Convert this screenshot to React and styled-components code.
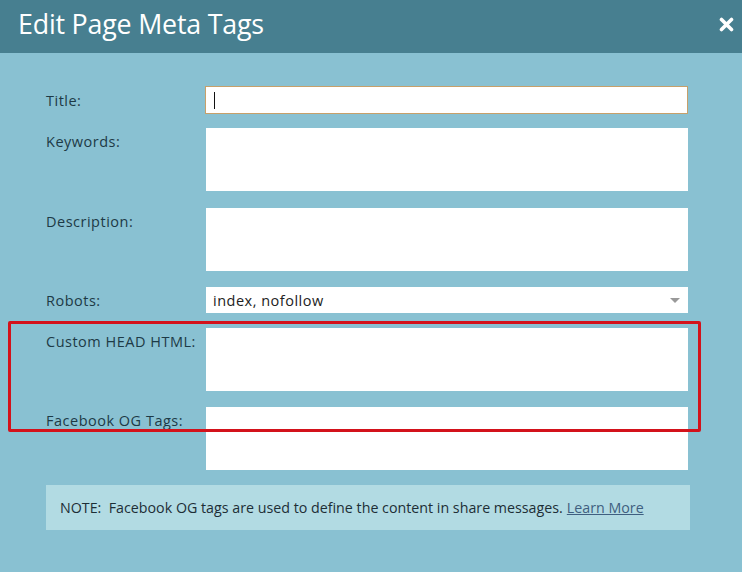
import styled, { createGlobalStyle } from 'styled-components'

const Global = createGlobalStyle`
  html, body {
    margin: 0;
    padding: 0;
    background: #89c1d2;
    font-family: "Open Sans", "Noto Sans", sans-serif;
  }
`;

const Dialog = styled.div`
  width: 742px;
  height: 572px;
  background: #89c1d2;
  position: relative;
  overflow: hidden;
`;

const Header = styled.div`
  height: 53px;
  background: #477f90;
  display: flex;
  align-items: center;
  justify-content: space-between;
  padding: 0 8px 0 18px;
  box-sizing: border-box;
`;

const Title = styled.h1`
  margin: 0;
  font-size: 26.8px;
  font-weight: 400;
  color: #ffffff;
  letter-spacing: -0.2px;
  line-height: 1;
  padding-bottom: 5px;
`;

const Close = styled.button`
  border: 0;
  background: none;
  padding: 0;
  width: 15px;
  height: 20px;
  display: flex;
  align-items: center;
  justify-content: center;
  margin-bottom: 4px;
  cursor: pointer;
`;

const Form = styled.div`
  padding: 33px 0 0 46px;
  display: flex;
  flex-direction: column;
`;

const Row = styled.div`
  display: grid;
  grid-template-columns: 159px 483px;
  margin-bottom: ${(p) => p.gap || 16}px;
`;

const Label = styled.label`
  font-size: 14.5px;
  letter-spacing: 0.5px;
  color: #1d3a46;
  padding-top: ${(p) => p.pt || 6}px;
  line-height: 19px;
`;

const TitleInput = styled.div`
  height: 28px;
  box-sizing: border-box;
  background: #fff;
  border: 1px solid #c7a06a;
  display: flex;
  align-items: center;
  padding-left: 8px;
`;

const Caret = styled.span`
  width: 1px;
  height: 17px;
  background: #111;
`;

const Area = styled.div`
  height: 63px;
  margin-left: 1px;
  width: 482px;
  background: #fff;
`;

const Select = styled.div`
  height: 26px;
  margin-left: 1px;
  width: 482px;
  background: #fff;
  display: flex;
  align-items: center;
  justify-content: space-between;
  padding: 0 8px 0 7px;
  box-sizing: border-box;
  font-size: 14.5px;
  letter-spacing: 0.5px;
  color: #222;
`;

const Arrow = styled.span`
  width: 0;
  height: 0;
  border-left: 5px solid transparent;
  border-right: 5px solid transparent;
  border-top: 5px solid #999;
  margin-top: 1px;
`;

const Note = styled.div`
  width: 644px;
  height: 45px;
  box-sizing: border-box;
  background: #b2dbe3;
  display: flex;
  align-items: center;
  padding: 0 0 0 14px;
  font-size: 14.25px;
  color: #1d2e36;
`;

const Link = styled.a`
  color: #3f5f80;
  text-decoration: underline;
  margin-left: 4px;
`;

const Highlight = styled.div`
  position: absolute;
  left: 8px;
  top: 321px;
  width: 693px;
  height: 111px;
  box-sizing: border-box;
  border: 3px solid #d3121b;
  border-radius: 2px;
  pointer-events: none;
`;

export default function App() {
  return (
    <Dialog>
      <Global />
      <Header>
        <Title>Edit Page Meta Tags</Title>
        <Close aria-label="close">
          <svg width="15" height="15" viewBox="0 0 15 15">
            <path d="M2.5 2.5 L12.5 12.5 M12.5 2.5 L2.5 12.5" stroke="#fff" strokeWidth="3.6" strokeLinecap="round" />
          </svg>
        </Close>
      </Header>
      <Form>
        <Row gap={14}>
          <Label pt={5}>Title:</Label>
          <TitleInput><Caret /></TitleInput>
        </Row>
        <Row gap={17}>
          <Label pt={4}>Keywords:</Label>
          <Area />
        </Row>
        <Row gap={16}>
          <Label pt={4}>Description:</Label>
          <Area />
        </Row>
        <Row gap={15}>
          <Label pt={4}>Robots:</Label>
          <Select>
            index, nofollow
            <Arrow />
          </Select>
        </Row>
        <Row gap={16}>
          <Label pt={4}>Custom HEAD HTML:</Label>
          <Area />
        </Row>
        <Row gap={15}>
          <Label pt={4}>Facebook OG Tags:</Label>
          <Area />
        </Row>
        <Note>
          NOTE:&nbsp; Facebook OG tags are used to define the content in share messages.
          <Link href="#">Learn More</Link>
        </Note>
      </Form>
      <Highlight />
    </Dialog>
  )
}
